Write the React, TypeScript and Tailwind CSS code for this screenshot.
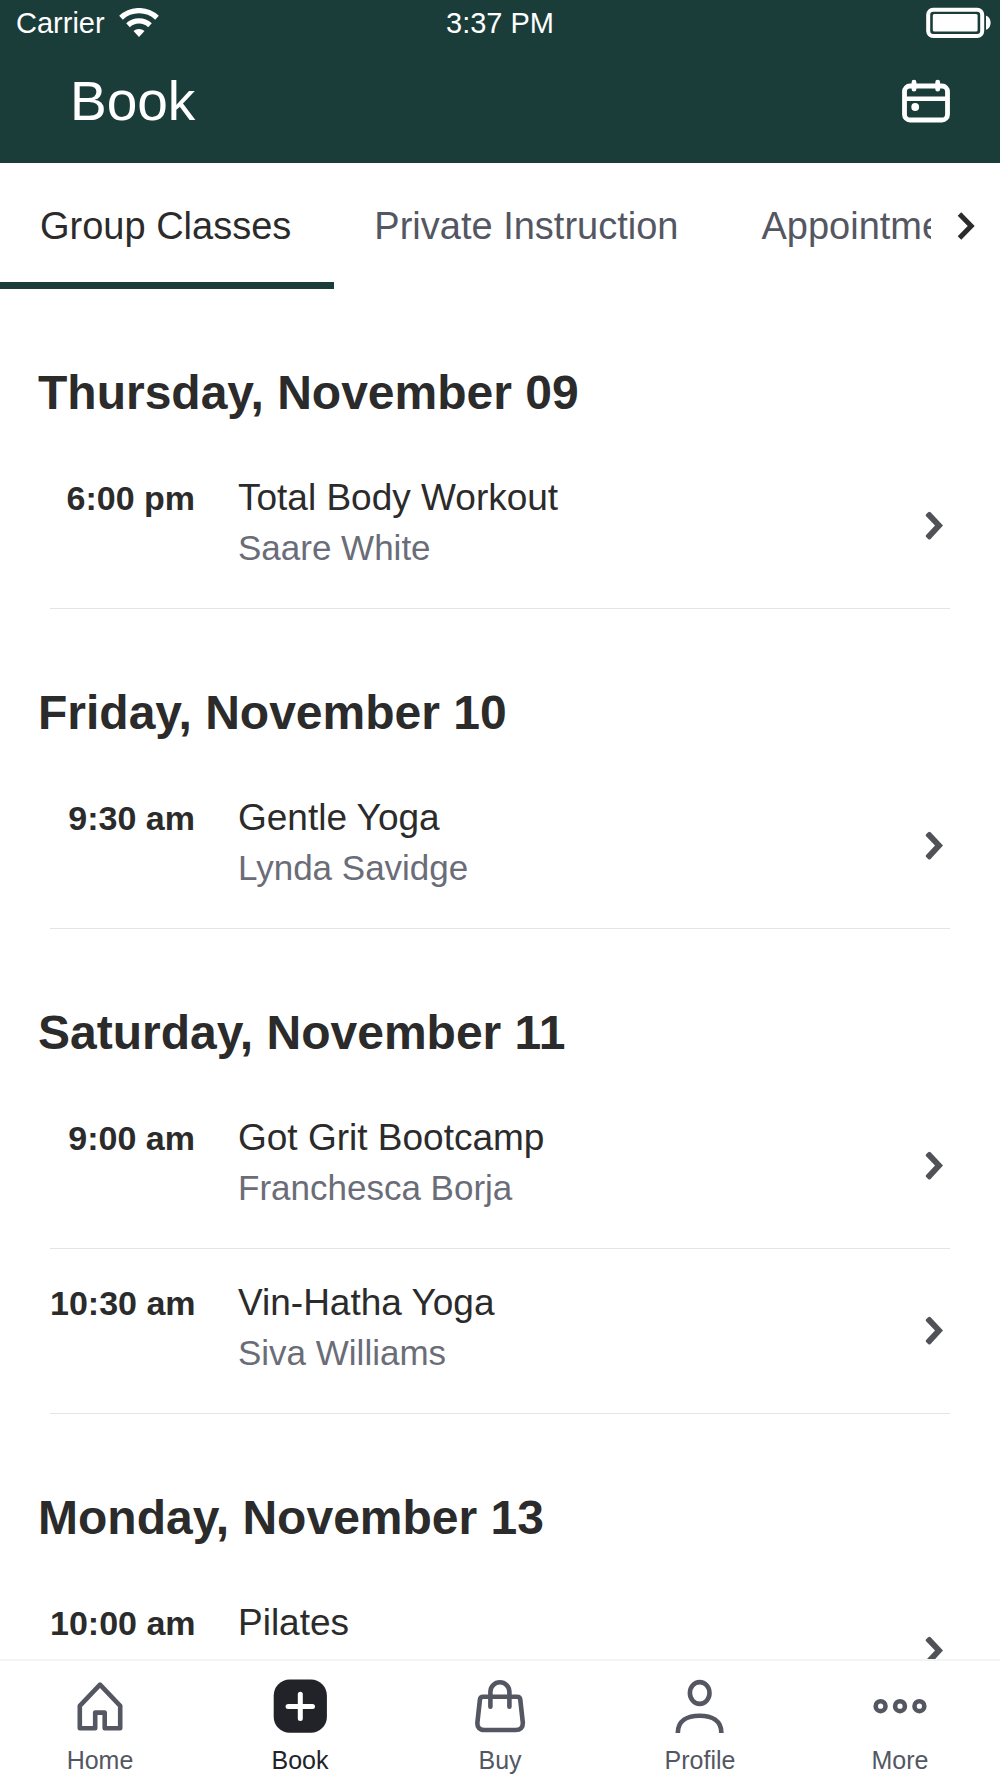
import { useState, type ReactNode } from "react";

type ClassItem = {
  time: string;
  name: string;
  instructor?: string;
};

const schedule: { day: string; classes: ClassItem[] }[] = [
  {
    day: "Thursday, November 09",
    classes: [{ time: "6:00 pm", name: "Total Body Workout", instructor: "Saare White" }]
  },
  {
    day: "Friday, November 10",
    classes: [{ time: "9:30 am", name: "Gentle Yoga", instructor: "Lynda Savidge" }]
  },
  {
    day: "Saturday, November 11",
    classes: [
      { time: "9:00 am", name: "Got Grit Bootcamp", instructor: "Franchesca Borja" },
      { time: "10:30 am", name: "Vin-Hatha Yoga", instructor: "Siva Williams" }
    ]
  },
  {
    day: "Monday, November 13",
    classes: [{ time: "10:00 am", name: "Pilates" }]
  }
];

const tabs = ["Group Classes", "Private Instruction", "Appointments"];

function WifiIcon() {
  return (
    <svg width="40" height="30" viewBox="0 0 40 30" fill="none" stroke="currentColor" strokeWidth="5.3" aria-hidden>
      <path d="M2 9.7A26.4 26.4 0 0 1 38 9.7" />
      <path d="M9 17.2A16.2 16.2 0 0 1 31 17.2" />
      <path d="M20 29L14.5 23.1A8 8 0 0 1 25.5 23.1Z" fill="currentColor" stroke="none" />
    </svg>
  );
}

function BatteryIcon() {
  return (
    <svg width="66" height="32" viewBox="0 0 66 32" fill="none" aria-hidden>
      <rect x="2.2" y="2.7" width="54" height="26.4" rx="5" stroke="currentColor" strokeWidth="4" />
      <rect x="6.8" y="7" width="44.8" height="17.6" rx="1.5" fill="currentColor" />
      <path d="M60 8.8C62.4 9.4 64.6 12 64.6 15.8S62.4 22.2 60 22.8Z" fill="currentColor" />
    </svg>
  );
}

function CalendarIcon() {
  return (
    <svg width="48" height="44" viewBox="0 0 48 44" fill="none" stroke="currentColor" strokeWidth="4.8" aria-hidden>
      <rect x="2.5" y="7" width="43" height="34" rx="5.5" />
      <path d="M2.5 19.8H45.5" strokeWidth="4.4" />
      <path d="M12 3.2V10.2M35.7 3.2V10.2" strokeLinecap="round" />
      <circle cx="13.2" cy="28" r="3.9" fill="currentColor" stroke="none" />
    </svg>
  );
}

function RowChevron() {
  return (
    <svg className="shrink-0" width="20" height="30" viewBox="0 0 20 30" fill="none" aria-hidden>
      <path
        d="M6.6 1.3L19 14.6L6.6 27.9Q5.4 28.9 4.2 27.9L2.1 26Q1.2 25 2.1 24L11 14.6L2.1 5.2Q1.2 4.2 2.1 3.2L4.2 1.3Q5.4 .3 6.6 1.3Z"
        fill="currentColor"
      />
    </svg>
  );
}

const navItems: { label: string; icon: ReactNode; active?: boolean }[] = [
  {
    label: "Home",
    icon: <path d="M28 6.7L48.2 27.8V50.2H32.7V34.6H23.2V50.2H7.8V27.8Z" strokeLinejoin="round" />
  },
  {
    label: "Book",
    active: true,
    icon: (
      <>
        <rect x="1.7" y="1.5" width="53.2" height="53.2" rx="16" fill="#222328" stroke="none" />
        <path d="M28.3 16.2V40.6M16.1 28.4H40.5" stroke="#fff" strokeWidth="5" strokeLinecap="round" />
      </>
    )
  },
  {
    label: "Buy",
    icon: (
      <>
        <path d="M11.2 18.7H45Q48 18.7 48.3 21.7L50.8 44.5Q51.2 52 43.5 52H12.7Q4.9 52 5.4 44.5L7.9 21.7Q8.2 18.7 11.2 18.7Z" />
        <path d="M18.4 28.7V13.8A9.5 9.5 0 0 1 37.4 13.8V28.7" strokeLinecap="round" />
      </>
    )
  },
  {
    label: "Profile",
    icon: (
      <>
        <ellipse cx="27.7" cy="15" rx="9.8" ry="10.9" />
        <path d="M5.8 54.9C5.8 42.6 15.4 37.7 27.6 37.7S49.4 42.6 49.4 54.9" />
      </>
    )
  },
  {
    label: "More",
    icon: (
      <>
        <circle cx="8.6" cy="28.2" r="4.9" />
        <circle cx="28" cy="28.2" r="4.9" />
        <circle cx="47.4" cy="28.2" r="4.9" />
      </>
    )
  }
];

function Header() {
  return (
    <header className="shrink-0 bg-[#1b3d39] text-white">
      <div className="grid h-[46px] grid-cols-3 items-center px-2 text-[29px] leading-[46px]">
        <div className="flex items-center gap-[14px] pl-2">
          <span>Carrier</span>
          <WifiIcon />
        </div>
        <span className="text-center">3:37 PM</span>
        <div className="flex justify-end">
          <BatteryIcon />
        </div>
      </div>
      <div className="flex items-center justify-between pr-[50px] pb-[7px] pl-[70px]">
        <h1 className="text-[55px] leading-[110px]">Book</h1>
        <button type="button" aria-label="Calendar">
          <CalendarIcon />
        </button>
      </div>
    </header>
  );
}

function Tabs() {
  const [selected, setSelected] = useState(tabs[0]);

  return (
    <div className="flex shrink-0">
      <div role="tablist" className="flex min-w-0 flex-1 overflow-hidden">
        {tabs.map((tab) => (
          <button
            key={tab}
            type="button"
            role="tab"
            aria-selected={tab === selected}
            onClick={() => setSelected(tab)}
            className={`shrink-0 border-y-[7px] border-t-transparent pr-[43px] pl-[40px] text-[38px] leading-[112px] whitespace-nowrap ${
              tab === selected ? "border-b-[#1b3d39] text-[#2b2b2b]" : "border-b-transparent text-[#545762]"
            }`}
          >
            {tab}
          </button>
        ))}
      </div>
      <button
        type="button"
        aria-label="Next tabs"
        className="flex w-[69px] shrink-0 items-center justify-center text-[#2b2b2b]"
      >
        <svg width="18" height="30" viewBox="0 0 18 30" fill="none" stroke="currentColor" strokeWidth="5" aria-hidden>
          <path d="M2.5 3L14.2 15L2.5 27" />
        </svg>
      </button>
    </div>
  );
}

function ClassRow({ time, name, instructor }: ClassItem) {
  return (
    <li>
      <a href="#class" className="flex h-[165px] items-center border-b border-[#e3e4e6] pr-[6px]">
        <span className="w-[145px] shrink-0 self-start pt-[29px] text-right text-[34px] leading-[50px] font-bold whitespace-nowrap text-[#2b2b2b]">
          {time}
        </span>
        <span className="ml-[43px] flex min-w-0 flex-1 flex-col self-start pt-[29px] leading-[50px]">
          <span className="truncate text-[37px] text-[#2b2b2b]">{name}</span>
          {instructor && <span className="truncate text-[35px] text-[#6a6d78]">{instructor}</span>}
        </span>
        <span className="text-[#505257]">
          <RowChevron />
        </span>
      </a>
    </li>
  );
}

function BottomNav() {
  return (
    <nav className="grid shrink-0 grid-cols-5 border-t-2 border-[#f4f4f5] bg-white pt-[17px] pb-[3px]">
      {navItems.map((item) => (
        <a
          key={item.label}
          href={`#${item.label.toLowerCase()}`}
          aria-current={item.active ? "page" : undefined}
          className={`flex flex-col items-center gap-[11px] text-[25px] leading-[30px] ${
            item.active ? "text-[#222328]" : "text-[#545762]"
          }`}
        >
          <svg width="56" height="56" viewBox="0 0 56 56" fill="none" stroke="currentColor" strokeWidth="4.6" aria-hidden>
            {item.icon}
          </svg>
          {item.label}
        </a>
      ))}
    </nav>
  );
}

function App() {
  return (
    <div className="flex h-screen flex-col bg-white font-['Liberation_Sans',Arial,sans-serif]">
      <Header />
      <Tabs />
      <main className="min-h-0 flex-1 overflow-y-auto [scrollbar-width:none]">
        {schedule.map((group) => (
          <section key={group.day}>
            <h2 className="px-[38px] pt-[76px] pb-[23px] text-[48px] leading-[56px] font-bold text-[#2b2b2b]">
              {group.day}
            </h2>
            <ul className="px-[50px]">
              {group.classes.map((item) => (
                <ClassRow key={item.time} {...item} />
              ))}
            </ul>
          </section>
        ))}
      </main>
      <BottomNav />
    </div>
  );
}

export default App;
